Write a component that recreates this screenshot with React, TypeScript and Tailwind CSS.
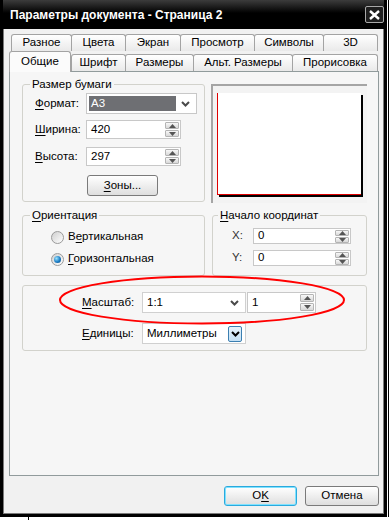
import type { ReactNode } from 'react'

/**
 * Диалог «Параметры документа» (вкладка «Общие»)
 */

function U({ children }: { children: ReactNode }) {
  return <span className="underline underline-offset-[2px]">{children}</span>
}

function Chevron() {
  return (
    <svg width="9" height="6" viewBox="0 0 9 6">
      <path d="M1 1l3.5 3.5L8 1" fill="none" stroke="#4a4a4a" strokeWidth="2" />
    </svg>
  )
}

function SpinBtn({ up }: { up?: boolean }) {
  return (
    <div className="flex flex-1 items-center justify-center rounded-[1px] border border-[#b4b4b4] bg-[linear-gradient(#f8f8f8,#d8d8d8)]">
      <svg width="7" height="4" viewBox="0 0 7 4">
        <path d={up ? 'M0 4L3.5 0L7 4Z' : 'M0 0L3.5 4L7 0Z'} fill="#555" />
      </svg>
    </div>
  )
}

function SpinField({ value, className }: { value: string; className: string }) {
  return (
    <div className={`flex border border-[#c8c8c8] bg-white ${className}`}>
      <span className="flex flex-1 items-center pl-[4px]">{value}</span>
      <div className="flex w-[16px] flex-col gap-px p-px">
        <SpinBtn up />
        <SpinBtn />
      </div>
    </div>
  )
}

function Group({
  title,
  titleClass = 'ml-[7px]',
  className,
  children,
}: {
  title?: ReactNode
  titleClass?: string
  className: string
  children: ReactNode
}) {
  return (
    <div className={`rounded-[3px] border border-[#d2d2cc] ${className}`}>
      {title && (
        <div className={`-mt-[8px] w-fit bg-[#f6f6f6] px-[2px] leading-[14px] ${titleClass}`}>{title}</div>
      )}
      {children}
    </div>
  )
}

function Radio({ checked }: { checked?: boolean }) {
  return (
    <span className="flex h-[13px] w-[13px] items-center justify-center rounded-full border border-[#9a9a9a] bg-[linear-gradient(135deg,#cfcfcf,#ffffff)]">
      {checked && (
        <span className="h-[7px] w-[7px] rounded-full bg-[radial-gradient(circle_at_35%_35%,#9be4ff,#1b7cc4_55%,#0a4c86)]" />
      )}
    </span>
  )
}

const tab = 'flex items-center justify-center rounded-t-[3px] border border-b-0 border-[#a3a3a3]'
const tabIdle = `${tab} h-[17px] bg-[linear-gradient(#ffffff,#e9e9e9)]`

function Button({ children, focus, className }: { children: ReactNode; focus?: boolean; className: string }) {
  return (
    <div
      className={`flex h-[20px] items-center justify-center rounded-[3px] border bg-[linear-gradient(#ffffff,#dedede)] ${
        focus ? 'border-[#2aa9dd] shadow-[inset_0_0_0_1px_#7fe2ff]' : 'border-[#7a7a7a]'
      } ${className}`}
    >
      {children}
    </div>
  )
}

export default function App() {
  return (
    <div className="relative flex h-[520px] w-[390px] flex-col bg-white font-['Liberation_Sans',Arial,sans-serif] text-[11.5px] text-black">
      <div className="flex">
        {/* окно диалога */}
        <div className="flex h-[517px] w-[387px] flex-col border-x-[3px] border-b-[3px] border-black bg-[#f1f1f1] shadow-[inset_0_0_0_1px_#7a7a7a]">
          {/* заголовок */}
          <div className="flex h-[29px] items-center justify-between bg-[linear-gradient(#3c3c3c,#000_45%,#000)] pl-[7px]">
            <span className="text-[12px] font-bold text-white">Параметры документа - Страница 2</span>
            <div className="flex h-[17px] w-[19px] items-center justify-center rounded-[2px] border border-[#a8a8a8] bg-[#1e1e1e]">
              <svg width="11" height="10" viewBox="0 0 11 10">
                <path d="M1 1l9 8M10 1l-9 8" stroke="#fff" strokeWidth="2.4" />
              </svg>
            </div>
          </div>

          <div className="flex flex-1 flex-col pl-[6px] pr-[5px] pt-[5px]">
            {/* вкладки */}
            <div className="ml-[2px] flex">
              <div className={`${tabIdle} w-[61px]`}>Разное</div>
              <div className={`${tabIdle} -ml-px w-[55px]`}>Цвета</div>
              <div className={`${tabIdle} -ml-px w-[56px]`}>Экран</div>
              <div className={`${tabIdle} -ml-px w-[75px]`}>Просмотр</div>
              <div className={`${tabIdle} -ml-px w-[70px]`}>Символы</div>
              <div className={`${tabIdle} -ml-px w-[55px]`}>3D</div>
            </div>
            <div className="flex h-[20px] items-end">
              <div className={`${tab} relative z-10 -mb-px h-[21px] w-[62px] bg-[#fbfbfb]`}>Общие</div>
              <div className={`${tabIdle} w-[55px]`}>Шрифт</div>
              <div className={`${tabIdle} -ml-px w-[69px]`}>Размеры</div>
              <div className={`${tabIdle} -ml-px w-[100px]`}>Альт. Размеры</div>
              <div className={`${tabIdle} -ml-px w-[86px]`}>Прорисовка</div>
            </div>

            {/* страница вкладки */}
            <div className="flex h-[405px] flex-col border border-[#919b9c] bg-[#f6f6f6] pl-[12px] pr-[11px] pt-[12px]">
              <div className="flex items-start gap-[6px]">
                <Group title="Размер бумаги" className="h-[118px] w-[183px]">
                  <div className="mt-[2px] flex h-[21px] pl-[12px]">
                    <span className="flex w-[51px] items-center">
                      <U>Ф</U>ормат:
                    </span>
                    <div className="flex w-[111px] border border-[#c8c8c8] bg-white p-[2px]">
                      <span className="flex flex-1 items-center bg-[#6e6f73] pl-[2px] text-white">А3</span>
                      <span className="flex w-[18px] items-center justify-center">
                        <Chevron />
                      </span>
                    </div>
                  </div>
                  <div className="mt-[6px] flex h-[19px] pl-[12px]">
                    <span className="flex w-[51px] items-center">
                      <U>Ш</U>ирина:
                    </span>
                    <SpinField value="420" className="w-[95px]" />
                  </div>
                  <div className="mt-[8px] flex h-[19px] pl-[12px]">
                    <span className="flex w-[51px] items-center">
                      <U>В</U>ысота:
                    </span>
                    <SpinField value="297" className="w-[95px]" />
                  </div>
                  <Button className="ml-[64px] mt-[9px] h-[21px] w-[71px]">
                    <span>
                      <U>З</U>оны...
                    </span>
                  </Button>
                </Group>

                {/* предпросмотр листа */}
                <div className="h-[119px] w-[156px] border-l-2 border-t-2 border-[#a5a5a5] bg-[#f3f3f3] pl-[4px] pt-[7px]">
                  <div className="h-[102px] w-[144px] border-b border-l border-[#e00000] bg-white shadow-[2px_2px_0_#000]" />
                </div>
              </div>

              <div className="mt-[12px] flex items-start gap-[7px]">
                <Group
                  title={
                    <>
                      <U>О</U>риентация
                    </>
                  }
                  className="h-[61px] w-[183px]"
                >
                  <div className="mt-[8px] flex h-[14px] items-center gap-[4px] pl-[28px]">
                    <Radio />
                    <span>
                      В<U>е</U>ртикальная
                    </span>
                  </div>
                  <div className="mt-[8px] flex h-[14px] items-center gap-[4px] pl-[28px]">
                    <Radio checked />
                    <span>
                      <U>Г</U>оризонтальная
                    </span>
                  </div>
                </Group>

                <Group
                  title={
                    <>
                      <U>Н</U>ачало координат
                    </>
                  }
                  titleClass="ml-[5px]"
                  className="h-[61px] w-[155px]"
                >
                  <div className="mt-[6px] flex h-[16px] pl-[19px]">
                    <span className="flex w-[21px] items-center text-[#333]">X:</span>
                    <SpinField value="0" className="w-[98px]" />
                  </div>
                  <div className="mt-[6px] flex h-[16px] pl-[19px]">
                    <span className="flex w-[21px] items-center text-[#333]">Y:</span>
                    <SpinField value="0" className="w-[98px]" />
                  </div>
                </Group>
              </div>

              <Group className="mt-[9px] h-[66px] w-full pt-[6px]">
                <div className="flex h-[21px] pl-[59px]">
                  <span className="flex w-[60px] items-center">
                    <U>М</U>асштаб:
                  </span>
                  <div className="flex w-[104px] items-center border border-[#d0d0d0] bg-white pl-[4px] pr-[6px]">
                    <span className="flex-1">1:1</span>
                    <Chevron />
                  </div>
                  <SpinField value="1" className="ml-px w-[69px]" />
                </div>
                <div className="mt-[10px] flex h-[21px] pl-[59px]">
                  <span className="flex w-[60px] items-center">
                    <U>Е</U>диницы:
                  </span>
                  <div className="flex w-[104px] items-center border border-[#d0d0d0] bg-white pl-[4px] pr-[3px]">
                    <span className="flex-1">Миллиметры</span>
                    <span className="flex h-[16px] w-[14px] items-center justify-center rounded-[2px] border border-[#3c7fb1] bg-[linear-gradient(#e6f3fc,#c4e0f4)]">
                      <svg width="9" height="6" viewBox="0 0 9 6">
                        <path d="M1 1l3.5 3.5L8 1" fill="none" stroke="#000" strokeWidth="2" />
                      </svg>
                    </span>
                  </div>
                </div>
              </Group>
            </div>

            {/* кнопки */}
            <div className="mt-[10px] flex justify-end gap-[8px]">
              <Button focus className="w-[73px]">
                <span>
                  О<U>K</U>
                </span>
              </Button>
              <Button className="w-[74px]">Отмена</Button>
            </div>
          </div>
        </div>
        <div className="flex-1 pl-px">
          <div className="h-full w-px bg-black" />
        </div>
      </div>
      <div className="flex-1 pl-[28px]">
        <div className="h-full w-px bg-black" />
      </div>

      {/* красная пометка поверх окна */}
      <svg className="pointer-events-none absolute left-0 top-0" width="390" height="520">
        <ellipse cx="202" cy="300" rx="142" ry="23.5" fill="none" stroke="#ff0000" strokeWidth="2" />
      </svg>
    </div>
  )
}
